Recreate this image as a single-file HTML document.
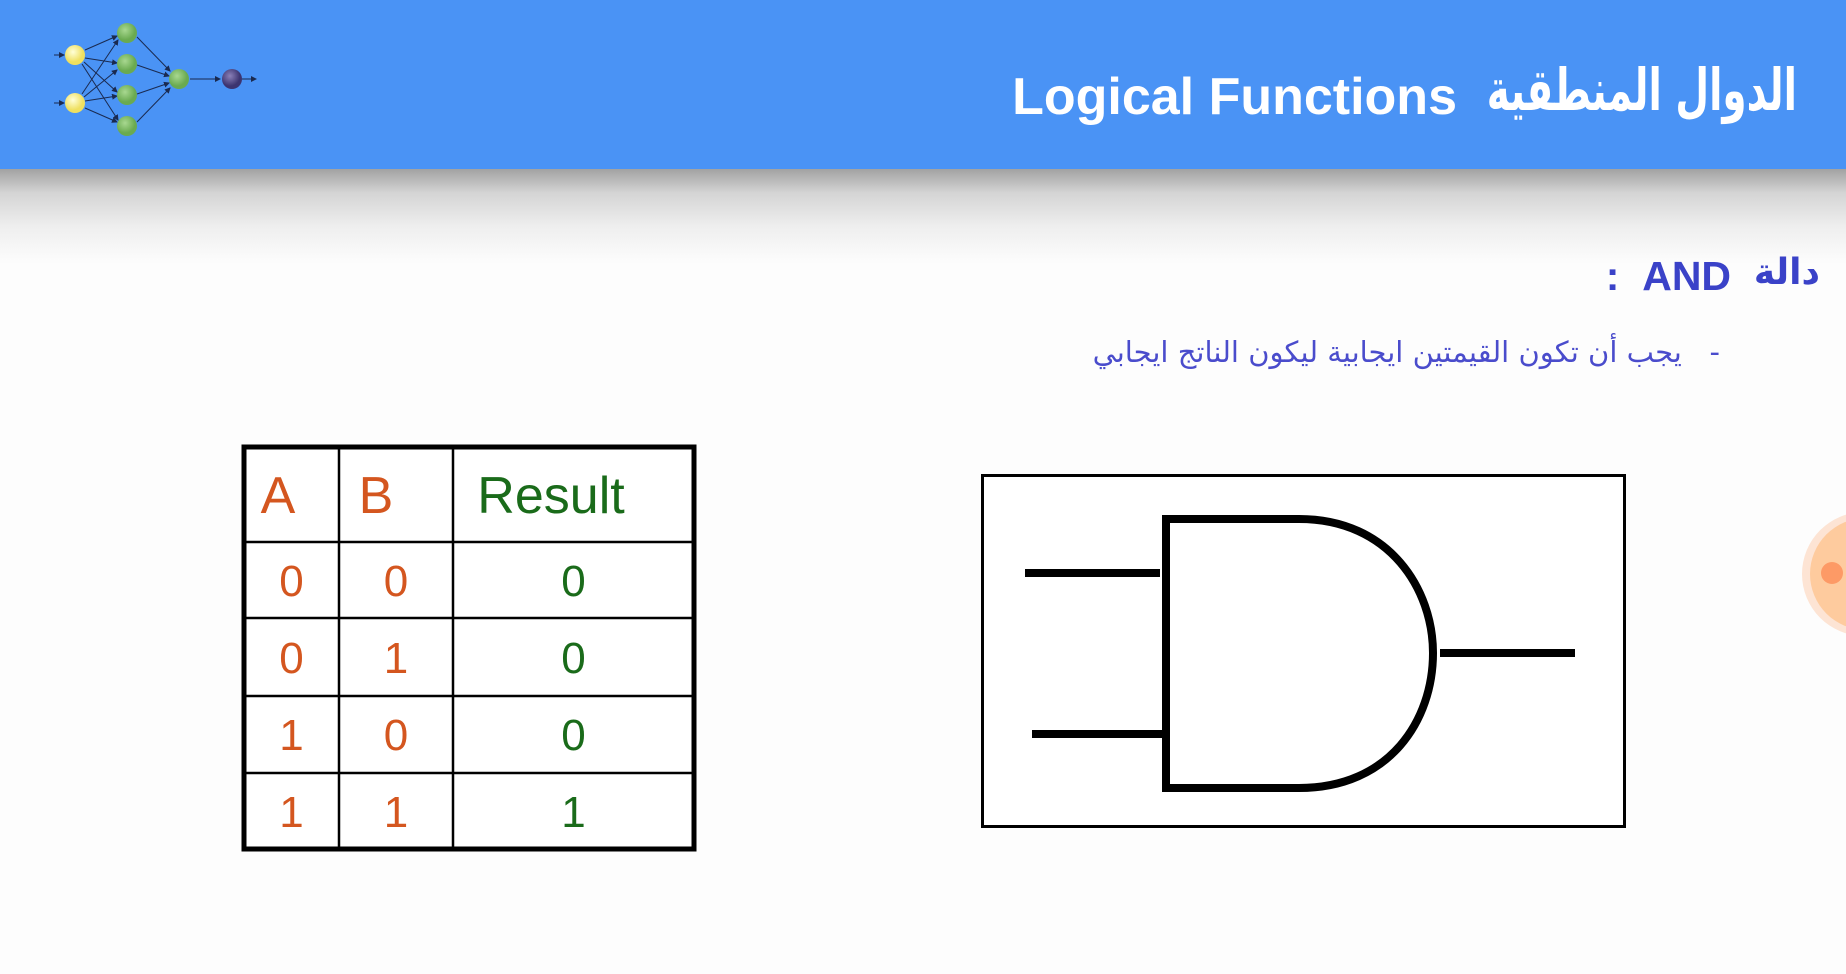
<!DOCTYPE html>
<html><head><meta charset="utf-8">
<style>
html,body{margin:0;padding:0}
body{width:1846px;height:974px;position:relative;overflow:hidden;background:#fdfdfd;font-family:"Liberation Sans","DejaVu Sans",sans-serif}
.hdr{position:absolute;left:0;top:0;width:1846px;height:169px;background:#4a93f5}
.shadow{position:absolute;left:0;top:169px;width:1846px;height:95px;background:linear-gradient(#a2a2a2,#d4d4d4 25%,#eeeeee 60%,#fdfdfd)}
.title{position:absolute;right:389px;top:71px;height:52px;line-height:52px;font-size:52px;font-weight:bold;color:#fff;white-space:nowrap}
.titlear{position:absolute;right:49px;top:60px;height:60px;line-height:60px;font-size:58px;font-weight:bold;color:#fff;white-space:nowrap;font-family:"DejaVu Sans",sans-serif;transform:scaleX(0.67);transform-origin:right center}
.ar{font-family:"DejaVu Sans",sans-serif}
.and{position:absolute;right:26px;top:256px;line-height:41px;font-size:41px;font-weight:bold;color:#3a42c8;white-space:nowrap}
.sent{position:absolute;right:126px;top:336px;line-height:32px;font-size:29px;color:#4a4ccc;white-space:nowrap;font-family:"DejaVu Sans",sans-serif}
.cell{position:absolute;text-align:center;font-size:44px;line-height:44px}
.o{color:#d4561f}.g{color:#1a6b1a}
</style></head><body>
<div class="hdr"></div>
<div class="shadow"></div>
<svg style="position:absolute;left:0;top:0" width="300" height="168" viewBox="0 0 300 168">
<defs>
<radialGradient id="y" cx="40%" cy="35%"><stop offset="0" stop-color="#ffffd8"/><stop offset="1" stop-color="#efe060"/></radialGradient>
<radialGradient id="gr" cx="40%" cy="35%"><stop offset="0" stop-color="#a8d890"/><stop offset="1" stop-color="#6aaa50"/></radialGradient>
<radialGradient id="p" cx="40%" cy="35%"><stop offset="0" stop-color="#8a80b8"/><stop offset="1" stop-color="#3c3470"/></radialGradient>
<marker id="ar" markerWidth="6" markerHeight="6" refX="5" refY="3" orient="auto"><path d="M0,0 L6,3 L0,6z" fill="#1a2a50"/></marker>
</defs>
<g stroke="#1a2a50" stroke-width="1" marker-end="url(#ar)">
<line x1="54" y1="55" x2="64" y2="55"/><line x1="54" y1="103" x2="64" y2="103"/>
<line x1="85" y1="50" x2="117" y2="36"/><line x1="85" y1="58" x2="117" y2="63"/><line x1="84" y1="62" x2="117" y2="92"/><line x1="82" y1="64" x2="118" y2="120"/>
<line x1="82" y1="94" x2="118" y2="40"/><line x1="84" y1="97" x2="117" y2="70"/><line x1="85" y1="101" x2="117" y2="96"/><line x1="85" y1="108" x2="117" y2="122"/>
<line x1="137" y1="37" x2="170" y2="71"/><line x1="137" y1="65" x2="169" y2="76"/><line x1="137" y1="94" x2="169" y2="83"/><line x1="137" y1="122" x2="170" y2="88"/>
<line x1="190" y1="79" x2="220" y2="79"/><line x1="242" y1="79" x2="256" y2="79"/>
</g>
<circle cx="75" cy="55" r="10" fill="url(#y)"/><circle cx="75" cy="103" r="10" fill="url(#y)"/>
<circle cx="127" cy="33" r="10" fill="url(#gr)"/><circle cx="127" cy="64" r="10" fill="url(#gr)"/><circle cx="127" cy="95" r="10" fill="url(#gr)"/><circle cx="127" cy="126" r="10" fill="url(#gr)"/>
<circle cx="179" cy="79" r="10" fill="url(#gr)"/><circle cx="232" cy="79" r="10" fill="url(#p)"/>
</svg>
<div class="title">Logical Functions</div>
<div class="titlear">الدوال المنطقية</div>
<div class="and">:&nbsp;&nbsp;AND&nbsp;&nbsp;<span class="ar" style="font-size:36px;position:relative;top:-6px">دالة</span></div>
<div class="sent">يجب أن تكون القيمتين ايجابية ليكون الناتج ايجابي&nbsp;&nbsp;&nbsp;-</div>

<svg style="position:absolute;left:0;top:0" width="1846" height="974">
<rect x="244" y="447" width="450" height="402" fill="#fff" stroke="#000" stroke-width="5"/>
<g stroke="#000" stroke-width="2.5">
<line x1="339" y1="447" x2="339" y2="849"/><line x1="453" y1="447" x2="453" y2="849"/>
<line x1="244" y1="542" x2="694" y2="542"/><line x1="244" y1="618" x2="694" y2="618"/><line x1="244" y1="696" x2="694" y2="696"/><line x1="244" y1="773" x2="694" y2="773"/>
</g>
<rect x="982.5" y="475.5" width="642" height="351" fill="#fff" stroke="#000" stroke-width="3"/>
<g stroke="#000" fill="none" stroke-width="8">
<path d="M1166,519 L1299,519 C1390,519 1433,590 1433,653 C1433,720 1390,788 1299,788 L1166,788 Z" stroke-width="8"/>
<line x1="1025" y1="573" x2="1160" y2="573"/>
<line x1="1032" y1="734" x2="1166" y2="734"/>
<line x1="1440" y1="653" x2="1575" y2="653"/>
</g>
<circle cx="1864" cy="574" r="62" fill="#fde4d4"/>
<circle cx="1866" cy="574" r="56" fill="#fecb9e"/>
<circle cx="1832" cy="573" r="11" fill="#fd9a66"/>
</svg>

<div class="cell o" style="left:258px;top:470px;width:40px;font-size:52px;line-height:52px">A</div>
<div class="cell o" style="left:356px;top:470px;width:40px;font-size:52px;line-height:52px">B</div>
<div class="cell g" style="left:472px;top:470px;width:158px;font-size:52px;line-height:52px">Result</div>

<div class="cell o" style="left:244px;top:560px;width:95px">0</div>
<div class="cell o" style="left:339px;top:560px;width:114px">0</div>
<div class="cell g" style="left:453px;top:560px;width:241px">0</div>
<div class="cell o" style="left:244px;top:637px;width:95px">0</div>
<div class="cell o" style="left:339px;top:637px;width:114px">1</div>
<div class="cell g" style="left:453px;top:637px;width:241px">0</div>
<div class="cell o" style="left:244px;top:714px;width:95px">1</div>
<div class="cell o" style="left:339px;top:714px;width:114px">0</div>
<div class="cell g" style="left:453px;top:714px;width:241px">0</div>
<div class="cell o" style="left:244px;top:791px;width:95px">1</div>
<div class="cell o" style="left:339px;top:791px;width:114px">1</div>
<div class="cell g" style="left:453px;top:791px;width:241px">1</div>
</body></html>
